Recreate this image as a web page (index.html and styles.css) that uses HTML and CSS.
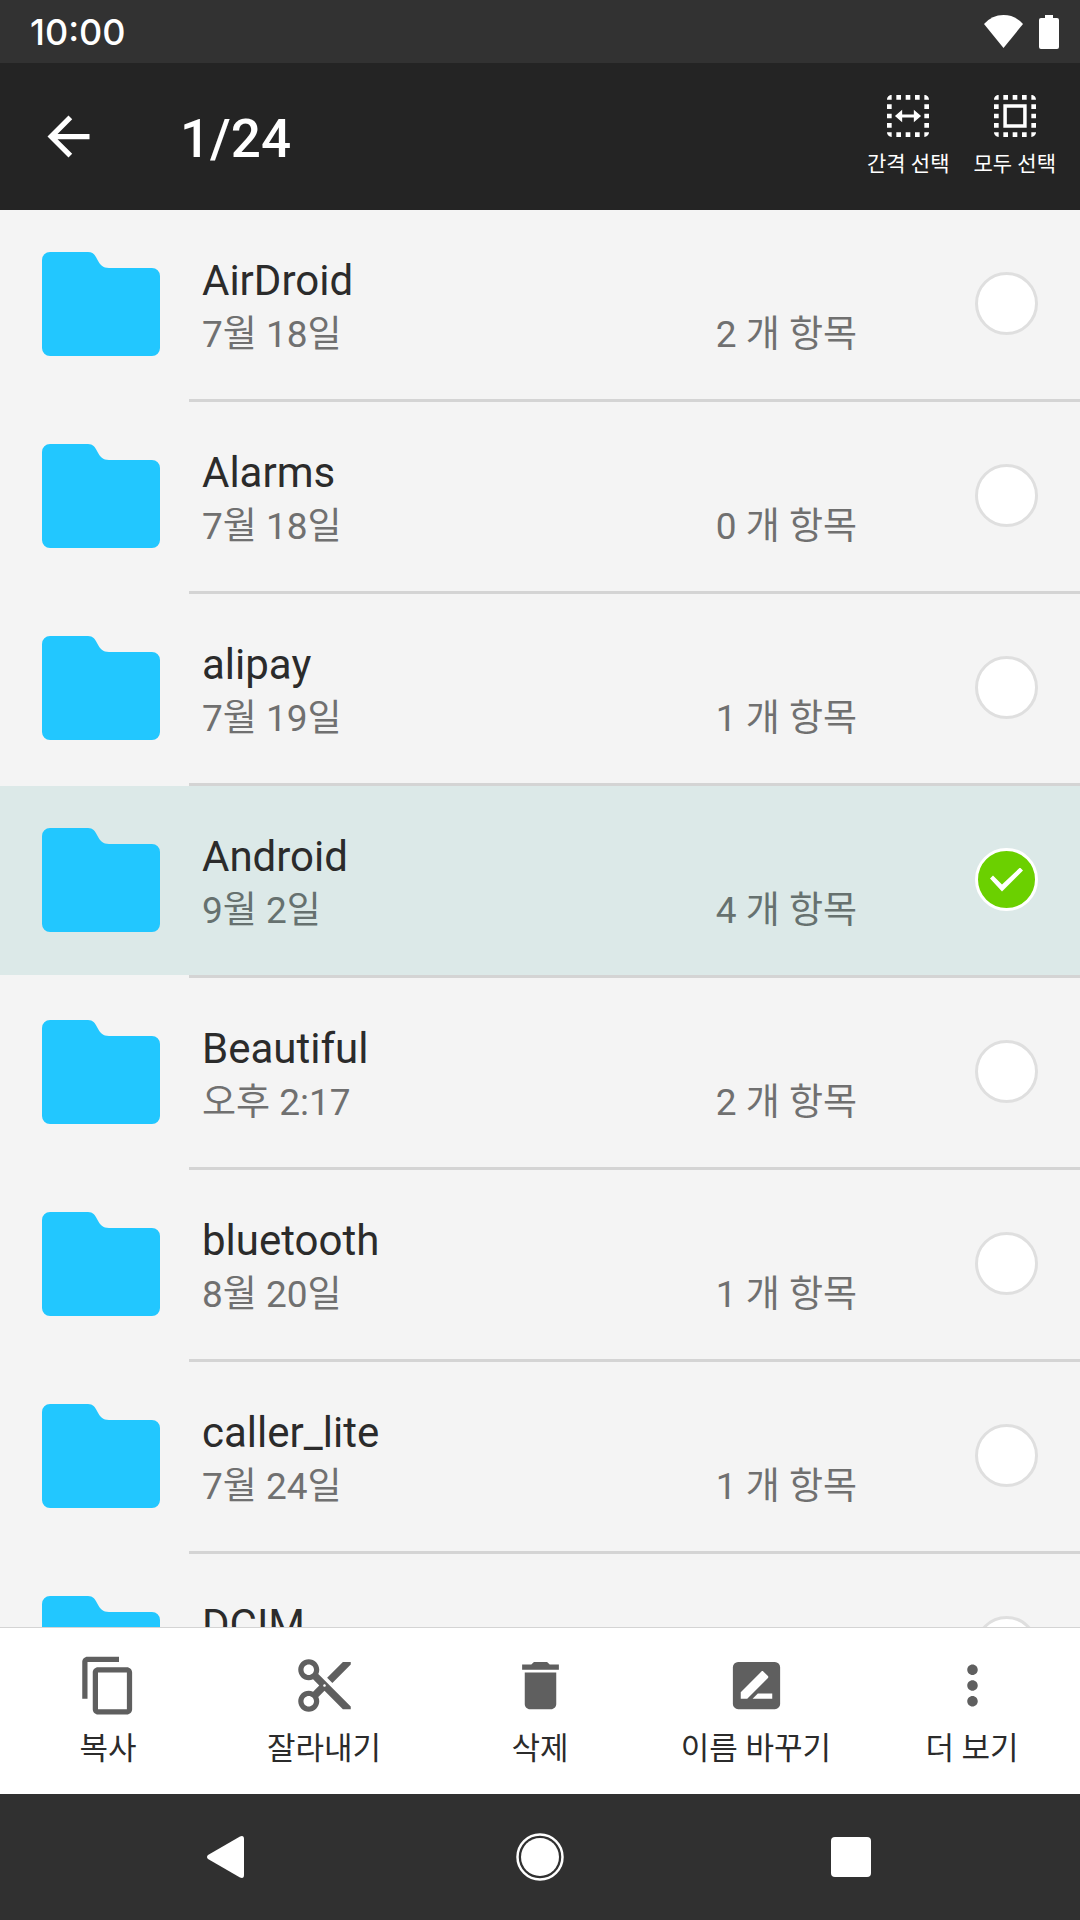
FILE: index.html
```html
<!DOCTYPE html>
<html lang="ko">
<head>
  <meta charset="UTF-8" />
  <meta name="viewport" content="width=device-width, initial-scale=1.0" />
  <title>파일</title>
  <link rel="stylesheet" href="styles.css">
</head>
<body>
  <svg class="defs" aria-hidden="true">
    <symbol id="folder" viewBox="0 0 118 104">
      <path d="M8 0H46C51 0 53 3 55 7C58 13 61 16 67 16H110a8 8 0 0 1 8 8V96a8 8 0 0 1-8 8H8a8 8 0 0 1-8-8V8a8 8 0 0 1 8-8z" />
    </symbol>
    <symbol id="dots" viewBox="0 0 24 24">
      <path d="M3 5h2V3c-1.1 0-2 .9-2 2zm0 8h2v-2H3v2zm4 8h2v-2H7v2zM3 9h2V7H3v2zm10-6h-2v2h2V3zm6 0v2h2c0-1.1-.9-2-2-2zM5 21v-2H3c0 1.1.9 2 2 2zm-2-4h2v-2H3v2zM9 3H7v2h2V3zm2 18h2v-2h-2v2zm8-8h2v-2h-2v2zm0 8c1.1 0 2-.9 2-2h-2v2zm0-12h2V7h-2v2zm0 8h2v-2h-2v2zm-4 4h2v-2h-2v2zm0-16h2V3h-2v2z" />
    </symbol>
  </svg>

  <div class="status">
    <span class="time">10:00</span>
    <svg class="wifi" viewBox="0 0 39 33"><path d="M0 9Q8 0 19.500 0T39 9L19.500 33z" /></svg>
    <svg class="battery" viewBox="0 0 20 34"><path d="M6 0h8v3h4a2 2 0 0 1 2 2v27a2 2 0 0 1-2 2H2a2 2 0 0 1-2-2V5a2 2 0 0 1 2-2h4z" /></svg>
  </div>

  <header class="header">
    <button class="back" aria-label="뒤로">
      <svg viewBox="0 0 24 24"><path d="M20 11H7.830l5.590-5.590L12 4l-8 8 8 8 1.410-1.410L7.830 13H20v-2z" /></svg>
    </button>
    <h1>1/24</h1>
    <button class="action">
      <svg viewBox="0 0 24 24"><use href="#dots" /><path d="M6.400 12l3.100-2.700v2.100h5V9.300l3.100 2.700-3.100 2.700v-2.100h-5v2.100z" /></svg>
      <span>간격 선택</span>
    </button>
    <button class="action">
      <svg viewBox="0 0 24 24"><use href="#dots" /><path d="M7 17h10V7H7zm1.500-1.500v-7h7v7z" fill-rule="evenodd" /></svg>
      <span>모두 선택</span>
    </button>
  </header>

  <ul class="list">
    <li>
      <label class="row">
        <svg class="folder"><use href="#folder" /></svg>
        <span class="name">AirDroid</span>
        <span class="date">7월 18일</span>
        <span class="count">2 개 항목</span>
        <input type="checkbox">
      </label>
    </li>
    <li>
      <label class="row">
        <svg class="folder"><use href="#folder" /></svg>
        <span class="name">Alarms</span>
        <span class="date">7월 18일</span>
        <span class="count">0 개 항목</span>
        <input type="checkbox">
      </label>
    </li>
    <li>
      <label class="row">
        <svg class="folder"><use href="#folder" /></svg>
        <span class="name">alipay</span>
        <span class="date">7월 19일</span>
        <span class="count">1 개 항목</span>
        <input type="checkbox">
      </label>
    </li>
    <li>
      <label class="row selected">
        <svg class="folder"><use href="#folder" /></svg>
        <span class="name">Android</span>
        <span class="date">9월 2일</span>
        <span class="count">4 개 항목</span>
        <input type="checkbox" checked>
      </label>
    </li>
    <li>
      <label class="row">
        <svg class="folder"><use href="#folder" /></svg>
        <span class="name">Beautiful</span>
        <span class="date">오후 2:17</span>
        <span class="count">2 개 항목</span>
        <input type="checkbox">
      </label>
    </li>
    <li>
      <label class="row">
        <svg class="folder"><use href="#folder" /></svg>
        <span class="name">bluetooth</span>
        <span class="date">8월 20일</span>
        <span class="count">1 개 항목</span>
        <input type="checkbox">
      </label>
    </li>
    <li>
      <label class="row">
        <svg class="folder"><use href="#folder" /></svg>
        <span class="name">caller_lite</span>
        <span class="date">7월 24일</span>
        <span class="count">1 개 항목</span>
        <input type="checkbox">
      </label>
    </li>
    <li>
      <label class="row">
        <svg class="folder"><use href="#folder" /></svg>
        <span class="name">DCIM</span>
        <input type="checkbox">
      </label>
    </li>
  </ul>

  <div class="toolbar">
    <button>
      <svg viewBox="0 0 24 24"><path d="M16 1H4c-1.100 0-2 .9-2 2v14h2V3h12V1zm3 4H8c-1.100 0-2 .9-2 2v14c0 1.100.9 2 2 2h11c1.100 0 2-.9 2-2V7c0-1.100-.9-2-2-2zm0 16H8V7h11v14z" /></svg>
      <span>복사</span>
    </button>
    <button>
      <svg viewBox="0 0 24 24"><path d="M9.640 7.640c.23-.5.36-1.050.36-1.640 0-2.210-1.790-4-4-4S2 3.790 2 6s1.790 4 4 4c.59 0 1.140-.13 1.640-.36L10 12l-2.360 2.360C7.140 14.130 6.590 14 6 14c-2.210 0-4 1.790-4 4s1.790 4 4 4 4-1.790 4-4c0-.59-.13-1.140-.36-1.640L12 14l7 7h3v-1L9.640 7.640zM6 8c-1.100 0-2-.89-2-2s.9-2 2-2 2 .89 2 2-.9 2-2 2zm0 12c-1.100 0-2-.89-2-2s.9-2 2-2 2 .89 2 2-.9 2-2 2zm6-7.500c-.28 0-.5-.22-.5-.5s.22-.5.5-.5.5.22.5.5-.22.5-.5.5zM19 3l-6 6 2 2 7-7V3z" /></svg>
      <span>잘라내기</span>
    </button>
    <button>
      <svg viewBox="0 0 24 24"><path d="M6 19c0 1.100.9 2 2 2h8c1.100 0 2-.9 2-2V7H6v12zM19 4h-3.500l-1-1h-5l-1 1H5v2h14V4z" /></svg>
      <span>삭제</span>
    </button>
    <button>
      <svg viewBox="0 0 24 24"><path fill-rule="evenodd" d="M5 3h14a2 2 0 0 1 2 2v14a2 2 0 0 1-2 2H5a2 2 0 0 1-2-2V5a2 2 0 0 1 2-2zM6 17h2.470l7.890-7.880c.2-.2.2-.51 0-.71l-1.770-1.770c-.2-.2-.51-.2-.71 0L6 14.530zM18 17v-2h-5.500l-2 2z" /></svg>
      <span>이름 바꾸기</span>
    </button>
    <button>
      <svg viewBox="0 0 24 24"><path d="M12 8c1.100 0 2-.9 2-2s-.9-2-2-2-2 .9-2 2 .9 2 2 2zm0 2c-1.100 0-2 .9-2 2s.9 2 2 2 2-.9 2-2-.9-2-2-2zm0 6c-1.100 0-2 .9-2 2s.9 2 2 2 2-.9 2-2-.9-2-2-2z" /></svg>
      <span>더 보기</span>
    </button>
  </div>

  <nav class="navbar">
    <button aria-label="뒤로"><svg viewBox="0 0 48 48"><path d="M3 22L35 3.500Q39 2 39 6V42Q39 46 35 44.500L3 26Q1 24 3 22z" /></svg></button>
    <button aria-label="홈"><svg viewBox="0 0 48 48"><circle cx="24" cy="24" r="19" /><circle cx="24" cy="24" r="22.500" fill="none" stroke="#fff" stroke-width="2.500" /></svg></button>
    <button aria-label="최근 앱"><svg viewBox="0 0 48 48"><rect x="4" y="4" width="40" height="40" rx="4" /></svg></button>
  </nav>
</body>
</html>
```
FILE: styles.css
```css
* { box-sizing: border-box; }
body { margin: 0; height: 100vh; display: flex; flex-direction: column; background: #f4f4f4; color: #2b2b2b; font-family: Roboto, "Noto Sans CJK KR", sans-serif; }
button { display: flex; flex-direction: column; align-items: center; padding: 0; border: none; background: none; color: inherit; font-family: inherit; cursor: pointer; }
svg { display: block; fill: currentColor; }
.defs { position: absolute; width: 0; height: 0; }

.status { flex: none; display: flex; align-items: center; height: 63px; padding: 0 21px 0 30px; background: #323232; color: #fff; }
.time { flex: 1; font-family: Inter, sans-serif; font-size: 36px; font-weight: 500; line-height: 40px; }
.wifi { width: 39px; height: 33px; margin-right: 16px; }
.battery { width: 20px; height: 34px; }

.header { flex: none; display: flex; align-items: center; height: 147px; padding: 0 24px 0 37px; background: #242424; color: #fff; }
.header h1 { flex: 1; margin: 0; padding: 4px 0 0 80px; font-size: 53px; font-weight: 500; line-height: 64px; }
.back svg { width: 63px; height: 63px; }
.action { margin-left: 24px; padding-bottom: 6px; font-size: 21px; line-height: 32px; white-space: nowrap; }
.action svg { width: 56px; height: 56px; margin-bottom: 4px; }

.list { flex: 1; min-height: 0; margin: 0; padding: 0; overflow: hidden; list-style: none; }
.list li::after { content: ""; display: block; height: 3px; margin-left: 189px; background: #d4d4d4; }
.row { display: grid; grid-template-columns: 118px 1fr auto 63px; grid-template-rows: 52px 52px; height: 189px; padding: 42px 42px 0; }
.row.selected { background: #dce9e8; }
.folder { grid-row: 1 / 3; width: 118px; height: 104px; color: #22c7ff; }
.name { grid-area: 1 / 2 / 2 / 4; padding-left: 42px; font-size: 42px; line-height: 58px; }
.date { grid-area: 2 / 2; padding-left: 42px; }
.count { grid-area: 2 / 3; margin-right: 118px; }
.date, .count { color: #707070; font-size: 37px; line-height: 62px; }
.selected .date, .selected .count { color: #66716f; }
.row input { grid-area: 1 / 4 / 3 / 5; display: grid; place-items: center; appearance: none; width: 63px; height: 63px; margin: 20px 0 0; border: 3px solid #dfdfdf; border-radius: 50%; background: #fff; }
.row input:checked { border-color: #fff; background: #6bd000; }
.row input:checked::before { content: ""; width: 33px; height: 24px; background: #fff; clip-path: polygon(0 11px, 3px 8px, 12px 17px, 30px 0, 33px 3px, 12px 24px); }

.toolbar { flex: none; display: grid; grid-template-columns: repeat(5, 1fr); height: 167px; padding-top: 26px; border-top: 1px solid #d4d4d4; background: #fff; }
.toolbar button { font-size: 31px; line-height: 48px; white-space: nowrap; }
.toolbar svg { width: 63px; height: 63px; margin-bottom: 8px; color: #5f5f5f; }

.navbar { flex: none; display: grid; grid-template-columns: repeat(3, 1fr); align-items: center; height: 126px; padding: 0 74px; background: #303030; color: #fff; }
.navbar svg { width: 48px; height: 48px; }
```
